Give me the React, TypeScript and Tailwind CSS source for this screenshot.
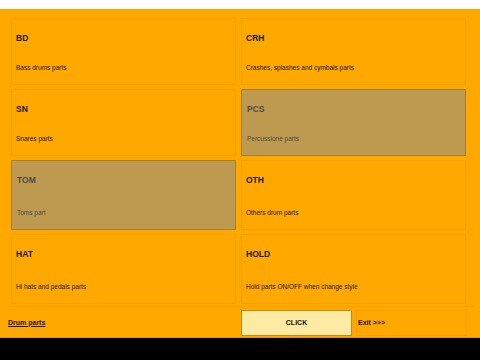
const parts = [
	{ id: 'BD', desc: 'Bass drums parts', on: false },
	{ id: 'CRH', desc: 'Crashes, splashes and cymbals parts', on: false },
	{ id: 'SN', desc: 'Snares parts', on: false },
	{ id: 'PCS', desc: 'Percussione parts', on: true },
	{ id: 'TOM', desc: 'Toms part', on: true },
	{ id: 'OTH', desc: 'Others drum parts', on: false },
	{ id: 'HAT', desc: 'Hi hats and pedals parts', on: false },
	{ id: 'HOLD', desc: 'Hold parts ON/OFF when change style', on: false },
];

const PartCard = ({ id, desc, on }: { id: string; desc: string; on: boolean }) => (
	<div
		className={
			on
				? 'flex flex-col justify-between border border-[#a3812f] bg-[#bd9a50] pb-[12px] pl-[5px] text-[#4f4a40]'
				: 'flex flex-col justify-between border border-[#f3a200] bg-[#ffa800] pb-[12px] pl-[4px] text-[#1c1303]'
		}
	>
		<div className="pt-[14px] text-[8.5px] font-bold leading-[10px]">{id}</div>
		<div className="text-[6.5px] leading-[8px]">{desc}</div>
	</div>
);

export default function App() {
	return (
		<div className="h-[360px] w-[480px] overflow-hidden bg-black font-['Liberation_Sans',Arial,sans-serif]">
			<div className="h-[9px] bg-white" />
			<div className="flex h-[329px] flex-col border-b border-[#e09400] bg-[#ffa800]">
				<div className="grid grid-cols-[225px_225px] grid-rows-[67px_67px_70px_70px] gap-x-[5px] gap-y-[4px] pl-[11px] pt-[9px]">
					{parts.map((p) => (
						<PartCard key={p.id} {...p} />
					))}
				</div>
				<div className="ml-[11px] mr-[6px] mt-[2px] h-px bg-[#f3a200]" />
				<div className="flex items-center pt-[3px]">
					<div className="w-[241px] pl-[8px] text-[7px] font-bold text-[#1c1303] underline">
						Drum parts
					</div>
					<button
						type="button"
						className="flex h-[26px] w-[111px] items-center justify-center border border-[#c48a10] bg-[#ffeaa4] text-[7px] font-bold text-[#1c1303]"
					>
						CLICK
					</button>
					<div className="ml-[4px] flex h-[26px] w-[111px] items-center border border-[#f3a200] pl-[1px] text-[7px] font-bold text-[#1c1303]">
						Exit &gt;&gt;&gt;
					</div>
				</div>
			</div>
		</div>
	);
}
